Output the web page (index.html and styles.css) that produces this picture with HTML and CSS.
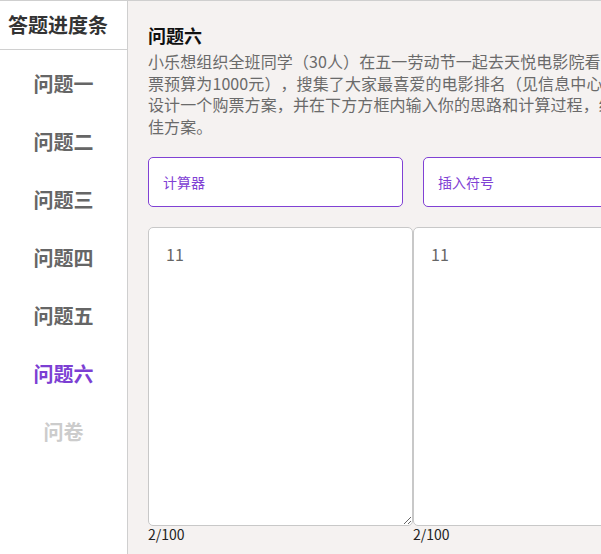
FILE: index.html
```html
<!DOCTYPE html>
<html lang="zh-CN">
<head>
<meta charset="utf-8">
<title>答题进度条</title>
<link rel="stylesheet" href="styles.css">
</head>
<body>
<div class="app">
  <aside class="sidebar">
    <div class="sidebar-title">答题进度条</div>
    <ul class="steps">
      <li class="step">问题一</li>
      <li class="step">问题二</li>
      <li class="step">问题三</li>
      <li class="step">问题四</li>
      <li class="step">问题五</li>
      <li class="step step-active">问题六</li>
      <li class="step step-disabled">问卷</li>
    </ul>
  </aside>
  <main class="main">
    <h1 class="q-title">问题六</h1>
    <p class="q-text">小乐想组织全班同学（30人）在五一劳动节一起去天悦电影院看电影（电影票预算为1000元），搜集了大家最喜爱的电影排名（见信息中心），请帮他设计一个购票方案，并在下方方框内输入你的思路和计算过程，给出一个最佳方案。</p>
    <div class="tools">
      <button class="tool-btn">计算器</button>
      <button class="tool-btn">插入符号</button>
    </div>
    <div class="answers">
      <div class="answer">
        <textarea class="answer-box">11</textarea>
        <div class="counter">2/100</div>
      </div>
      <div class="answer">
        <textarea class="answer-box">11</textarea>
        <div class="counter">2/100</div>
      </div>
    </div>
  </main>
</div>
</body>
</html>
```
FILE: styles.css
```css
html, body {
  margin: 0;
  padding: 0;
  height: 100%;
  overflow: hidden;
}
body {
  font-family: "Noto Sans CJK SC", "Noto Sans", sans-serif;
  background: #f5f2f1;
  text-spacing-trim: space-all;
}
.app {
  display: flex;
  height: 100%;
  border-top: 1px solid #cfcfcf;
  box-sizing: border-box;
}
.sidebar {
  flex: 0 0 127px;
  background: #fff;
  border-right: 1px solid #cfcfcf;
}
.sidebar-title {
  height: 48px;
  line-height: 48px;
  padding-left: 8px;
  font-size: 20px;
  font-weight: 700;
  color: #333;
  border-bottom: 1px solid #d0d0d0;
}
.steps {
  list-style: none;
  margin: 0;
  padding: 5px 0 0;
}
.step {
  height: 58px;
  line-height: 58px;
  text-align: center;
  font-size: 20px;
  font-weight: 700;
  color: #666;
}
.step-active {
  color: #7c3fd3;
}
.step-disabled {
  color: #cccccc;
}
.main {
  flex: 1;
  min-width: 0;
  padding: 21px 0 0 20px;
}
.q-title {
  margin: 0;
  font-size: 18px;
  line-height: 26px;
  font-weight: 700;
  color: #111;
}
.q-text {
  width: 540px;
  margin: 3px 0 0;
  font-size: 16px;
  line-height: 21.7px;
  color: #6a6a6a;
  letter-spacing: 0.1px;
}
.tools {
  display: flex;
  gap: 20px;
  margin-top: 19px;
}
.tool-btn {
  flex: 0 0 255px;
  height: 50px;
  box-sizing: border-box;
  padding: 0 0 0 14px;
  text-align: left;
  background: #fff;
  border: 1px solid #8041d4;
  border-radius: 5px;
  font-family: "Noto Sans CJK SC", sans-serif;
  font-size: 14px;
  color: #8041d4;
}
.answers {
  display: flex;
  margin-top: 20px;
}
.answer {
  flex: 0 0 265px;
  display: flex;
  flex-direction: column;
}
.answer-box {
  display: block;
  width: 265px;
  height: 299px;
  box-sizing: border-box;
  margin: 0;
  padding: 15px 17px;
  border: 1px solid #c8c8c8;
  border-radius: 5px;
  background: #fff;
  font-family: "Noto Sans CJK SC", sans-serif;
  font-size: 16px;
  line-height: 22px;
  color: #666;
  resize: both;
  outline: none;
}
.counter {
  font-size: 14px;
  line-height: 16px;
  color: #222;
}
```
